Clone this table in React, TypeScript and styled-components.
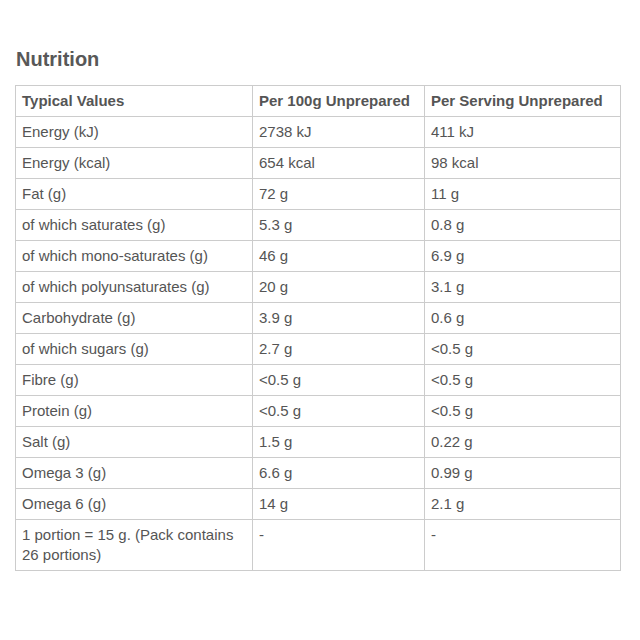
import React from "react";
import styled, { createGlobalStyle } from "styled-components";

const Global = createGlobalStyle`
  html, body { margin: 0; padding: 0; background: #fff; }
  body { font-family: "Liberation Sans", Arial, sans-serif; color: #555; }
`;

const Page = styled.div`
  padding: 47px 19px 0 15px;
  width: 606px;
`;

const Title = styled.h2`
  margin: 0 0 14px 1px;
  font-size: 20px;
  line-height: 24px;
  font-weight: bold;
  color: #585858;
`;

const Table = styled.table`
  width: 606px;
  border-collapse: collapse;
  font-size: 15px;
  line-height: 20px;
  color: #555;
  table-layout: fixed;
`;

const Th = styled.th<{ $w?: number }>`
  text-align: left;
  font-weight: bold;
  border: 1px solid #ccc;
  padding: 5px 6px;
  vertical-align: top;
  ${(p) => (p.$w ? `width: ${p.$w}px;` : "")}
`;

const Td = styled.td`
  border: 1px solid #ccc;
  padding: 5px 6px;
  vertical-align: top;
`;

const rows: [string, string, string][] = [
  ["Energy (kJ)", "2738 kJ", "411 kJ"],
  ["Energy (kcal)", "654 kcal", "98 kcal"],
  ["Fat (g)", "72 g", "11 g"],
  ["of which saturates (g)", "5.3 g", "0.8 g"],
  ["of which mono-saturates (g)", "46 g", "6.9 g"],
  ["of which polyunsaturates (g)", "20 g", "3.1 g"],
  ["Carbohydrate (g)", "3.9 g", "0.6 g"],
  ["of which sugars (g)", "2.7 g", "<0.5 g"],
  ["Fibre (g)", "<0.5 g", "<0.5 g"],
  ["Protein (g)", "<0.5 g", "<0.5 g"],
  ["Salt (g)", "1.5 g", "0.22 g"],
  ["Omega 3 (g)", "6.6 g", "0.99 g"],
  ["Omega 6 (g)", "14 g", "2.1 g"],
  ["1 portion = 15 g. (Pack contains 26 portions)", "-", "-"],
];

export default function App() {
  return (
    <>
      <Global />
      <Page>
        <Title>Nutrition</Title>
        <Table>
          <thead>
            <tr>
              <Th $w={224}>Typical Values</Th>
              <Th $w={159}>Per 100g Unprepared</Th>
              <Th>Per Serving Unprepared</Th>
            </tr>
          </thead>
          <tbody>
            {rows.map((r, i) => (
              <tr key={i}>
                <Td>{r[0]}</Td>
                <Td>{r[1]}</Td>
                <Td>{r[2]}</Td>
              </tr>
            ))}
          </tbody>
        </Table>
      </Page>
    </>
  );
}
